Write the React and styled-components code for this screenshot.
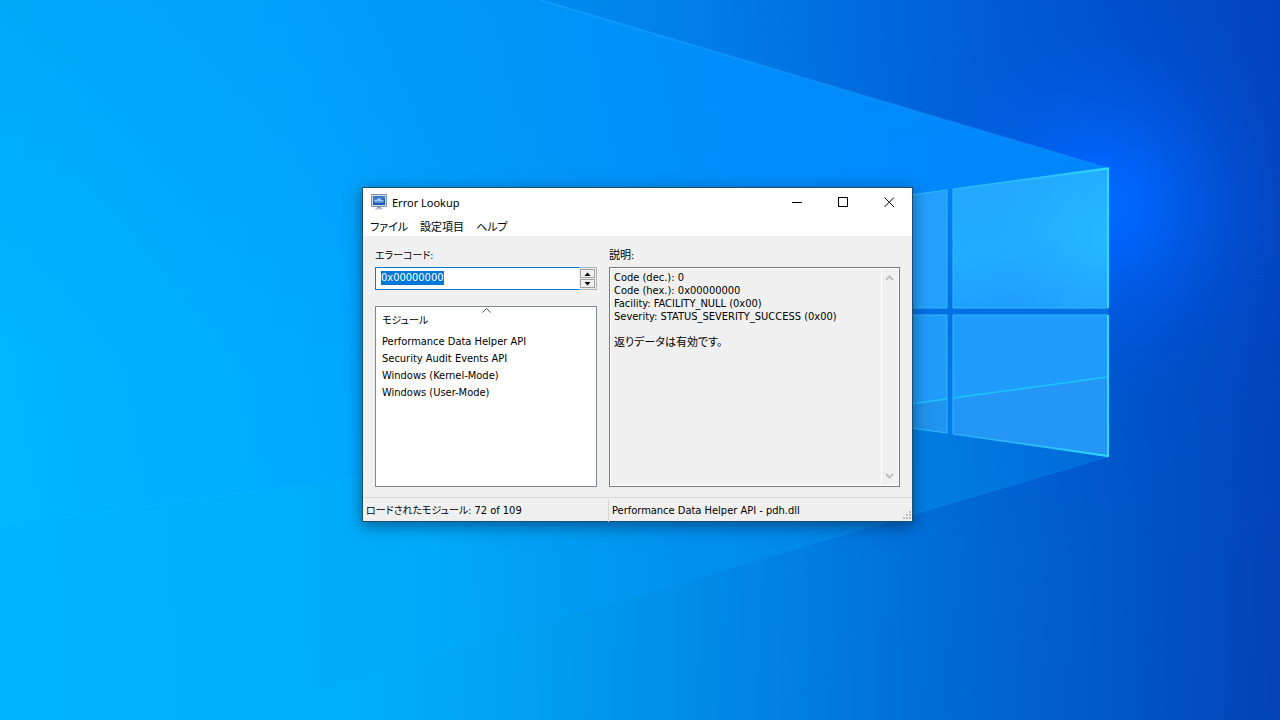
import { useEffect, useRef, useState } from "react";
import styled, { createGlobalStyle } from "styled-components";

const GlobalStyle = createGlobalStyle`
  *, *::before, *::after {
    box-sizing: border-box;
  }
  body {
    margin: 0;
    background: #0078d7;
  }
  button, input, textarea {
    font: inherit;
    color: inherit;
    margin: 0;
    padding: 0;
    border: 0;
    border-radius: 0;
    outline: none;
    background: none;
  }
`;

const Desktop = styled.main`
  position: relative;
  min-height: 100vh;
  overflow: hidden;
  display: flex;
  align-items: center;
  justify-content: center;
  padding: 0 5px 11px 0;
`;

const WallpaperSvg = styled.svg`
  position: absolute;
  inset: 0;
  width: 100%;
  height: 100%;
`;

const Window = styled.section`
  position: relative;
  width: 100%;
  max-width: 551px;
  border: 1px solid #18506f;
  background: #f0f0f0;
  color: #000;
  font-family: "DejaVu Sans Condensed", "Noto Sans CJK JP", sans-serif;
  font-size: 11px;
  line-height: 13px;
  font-feature-settings: "palt" 1;
  box-shadow: 0 4px 14px rgba(0, 20, 50, 0.5);
`;

const TitleBar = styled.header`
  display: flex;
  align-items: center;
  height: 28px;
  padding-left: 8px;
  gap: 5px;
  background: #fff;
`;

const Title = styled.h1`
  flex: 1;
  margin: 0;
  font-family: "Noto Sans", sans-serif;
  font-size: 11px;
  font-weight: 400;
`;

const CaptionButtons = styled.div`
  display: flex;
  align-self: stretch;
`;

const CaptionButton = styled.button`
  display: flex;
  align-items: center;
  justify-content: center;
  width: 46px;
  &:hover {
    background: ${(p) => (p.$danger ? "#e81123" : "#e5e5e5")};
  }
`;

const MenuBar = styled.nav`
  display: flex;
  gap: 12px;
  height: 20px;
  padding: 3px 7px 0;
  background: #fff;
`;

const MenuItem = styled.button`
  line-height: 17px;
  white-space: nowrap;
`;

const Content = styled.div`
  display: grid;
  grid-template-columns: 222fr 291fr;
  gap: 12px;
  padding: 12px 12px 10px;
`;

const Column = styled.div`
  display: flex;
  flex-direction: column;
  min-width: 0;
`;

const Label = styled.label`
  margin-bottom: 3px;
  font-size: ${(p) => (p.$kana ? 10 : 11)}px;
  line-height: 16px;
`;

const CodeField = styled.div`
  display: flex;
  height: 23px;
  margin-bottom: 16px;
`;

const CodeInput = styled.input`
  flex: 1;
  min-width: 0;
  padding: 3px 5px 4px;
  border: 1px solid #0078d7;
  border-right: 0;
  background: #fff;
  line-height: 14px;
  &::selection {
    background: #0078d7;
    color: #fff;
  }
`;

const Spinner = styled.div`
  display: flex;
  flex-direction: column;
  gap: 1px;
  width: 18px;
  padding: 1px;
  border: 1px solid #b4b4b4;
  border-left: 0;
`;

const SpinButton = styled.button`
  flex: 1;
  display: flex;
  align-items: center;
  justify-content: center;
  border: 1px solid #a0a0a0;
  background: #f0f0f0;
`;

const ListBox = styled.div`
  flex: 1;
  min-height: 181px;
  border: 1px solid #82878f;
  background: #fff;
`;

const ModuleTable = styled.table`
  width: 100%;
  border-collapse: collapse;
  & td {
    height: 17px;
    padding: 0 6px;
  }
`;

const HeaderCell = styled.th`
  position: relative;
  height: 26px;
  padding: 1px 6px 0;
  font-size: 10px;
  font-weight: 400;
  text-align: left;
`;

const SortMark = styled.svg`
  position: absolute;
  top: 1px;
  left: 50%;
  margin-left: -4px;
`;

const DescriptionBox = styled.div`
  flex: 1;
  display: flex;
  border: 1px solid #7a7a7a;
  outline: 1px solid #fff;
  outline-offset: -2px;
`;

const DescriptionText = styled.textarea`
  flex: 1;
  min-width: 0;
  padding: 3px 4px;
  line-height: 13px;
  resize: none;
  overflow: hidden;
`;

const ScrollBar = styled.div`
  display: flex;
  flex-direction: column;
  justify-content: space-between;
  width: 18px;
  padding-right: 2px;
  border-left: 1px solid #fff;
`;

const ScrollButton = styled.button`
  display: flex;
  align-items: center;
  justify-content: center;
  height: 20px;
`;

const StatusBar = styled.footer`
  position: relative;
  display: grid;
  grid-template-columns: 245fr 304fr;
  height: 24px;
  border-top: 1px solid #d7d7d7;
`;

const StatusPane = styled.div`
  margin: 1px 0;
  padding: 0 3px;
  line-height: 23px;
  white-space: nowrap;
  & + & {
    border-left: 1px solid #d7d7d7;
  }
`;

const Kana = styled.span`
  font-size: 10px;
`;

const Grip = styled.svg`
  position: absolute;
  right: 1px;
  bottom: 2px;
`;

function Wallpaper() {
  return (
    <WallpaperSvg viewBox="0 0 1280 720" preserveAspectRatio="xMidYMid slice" aria-hidden="true">
      <defs>
        <linearGradient id="upper" gradientUnits="userSpaceOnUse" x1="480" y1="60" x2="1280" y2="0">
          <stop offset="0" stopColor="#0092f0" />
          <stop offset="0.3" stopColor="#007ce8" />
          <stop offset="0.55" stopColor="#0064da" />
          <stop offset="0.8" stopColor="#0050cc" />
          <stop offset="1" stopColor="#0343bf" />
        </linearGradient>
        <linearGradient id="lower" gradientUnits="userSpaceOnUse" x1="0" y1="600" x2="1280" y2="640">
          <stop offset="0" stopColor="#00b4fb" />
          <stop offset="0.3" stopColor="#00adf8" />
          <stop offset="0.42" stopColor="#00a0f2" />
          <stop offset="0.6" stopColor="#0082e4" />
          <stop offset="0.76" stopColor="#0068d3" />
          <stop offset="0.88" stopColor="#0056c8" />
          <stop offset="1" stopColor="#0342b8" />
        </linearGradient>
        <linearGradient id="beam" gradientUnits="userSpaceOnUse" x1="0" y1="400" x2="1108" y2="200">
          <stop offset="0" stopColor="#00b6ff" />
          <stop offset="0.3" stopColor="#00a8ff" />
          <stop offset="0.5" stopColor="#0098f9" />
          <stop offset="0.72" stopColor="#008bfc" />
          <stop offset="1" stopColor="#0084fa" />
        </linearGradient>
        <linearGradient id="beamLow" gradientUnits="userSpaceOnUse" x1="0" y1="500" x2="1108" y2="440">
          <stop offset="0" stopColor="#00b5fd" />
          <stop offset="0.38" stopColor="#00aafa" />
          <stop offset="0.62" stopColor="#0090ee" />
          <stop offset="0.82" stopColor="#0080e4" />
          <stop offset="1" stopColor="#0068d8" />
        </linearGradient>
        <linearGradient id="edge" gradientUnits="userSpaceOnUse" x1="540" y1="0" x2="1108" y2="168">
          <stop offset="0" stopColor="#16a0ff" stopOpacity="0.7" />
          <stop offset="1" stopColor="#1a90ff" stopOpacity="0.3" />
        </linearGradient>
        <linearGradient id="rim" gradientUnits="userSpaceOnUse" x1="953" y1="0" x2="1108" y2="0">
          <stop offset="0" stopColor="#30b8ff" stopOpacity="0" />
          <stop offset="1" stopColor="#2cdcff" />
        </linearGradient>
        <linearGradient id="paneTop" x1="0" y1="0" x2="0.3" y2="1">
          <stop offset="0" stopColor="#24a8ff" />
          <stop offset="0.6" stopColor="#20acff" />
          <stop offset="1" stopColor="#1e9eff" />
        </linearGradient>
        <linearGradient id="gap" gradientUnits="userSpaceOnUse" x1="0" y1="168" x2="0" y2="457">
          <stop offset="0" stopColor="#0084f2" />
          <stop offset="0.5" stopColor="#0070e4" />
          <stop offset="1" stopColor="#0080e8" />
        </linearGradient>
        <radialGradient id="glow" gradientUnits="userSpaceOnUse" cx="1100" cy="205" r="220">
          <stop offset="0" stopColor="#006cff" />
          <stop offset="0.22" stopColor="#0066ff" stopOpacity="0.85" />
          <stop offset="0.5" stopColor="#0062f4" stopOpacity="0.4" />
          <stop offset="0.75" stopColor="#005cea" stopOpacity="0.12" />
          <stop offset="1" stopColor="#0058e0" stopOpacity="0" />
        </radialGradient>
        <radialGradient id="paneGlow" gradientUnits="userSpaceOnUse" cx="1108" cy="245" r="110">
          <stop offset="0" stopColor="#28c0ff" stopOpacity="0.7" />
          <stop offset="1" stopColor="#28b4ff" stopOpacity="0" />
        </radialGradient>
        <linearGradient id="split" gradientUnits="userSpaceOnUse" x1="0" y1="260" x2="0" y2="560">
          <stop offset="0" stopColor="#fff" stopOpacity="0" />
          <stop offset="1" stopColor="#fff" />
        </linearGradient>
        <linearGradient id="shade" gradientUnits="userSpaceOnUse" x1="0" y1="0" x2="0" y2="360">
          <stop offset="0" stopColor="#0090f4" stopOpacity="0.3" />
          <stop offset="1" stopColor="#0090f4" stopOpacity="0" />
        </linearGradient>
        <mask id="lowerMask">
          <rect width="1280" height="720" fill="url(#split)" />
        </mask>
      </defs>
      <rect width="1280" height="720" fill="url(#upper)" />
      <rect width="1280" height="720" fill="url(#lower)" mask="url(#lowerMask)" />
      <circle cx="1100" cy="205" r="220" fill="url(#glow)" />
      <path d="M0 0H540L1108 168V377L0 527Z" fill="url(#beam)" />
      <path d="M0 0H540L1108 168V360H0Z" fill="url(#shade)" />
      <path d="M0 527L1108 377V457L480 642L220 714L200 720H0Z" fill="url(#beamLow)" />
      <path d="M540 0L1108 168" stroke="url(#edge)" strokeWidth="2" />
      <path d="M0 526L912 403" stroke="#1cc0ff" strokeOpacity="0.3" />
      <path d="M200 720L480 642L1108 457" fill="none" stroke="#1aa8ff" strokeOpacity="0.2" />
      <path d="M880 199L1108 168V457L880 424Z" fill="url(#gap)" />
      <path d="M880 199L947 190V308H880Z" fill="#22a0fb" />
      <path d="M953 189L1108 168V308H953Z" fill="url(#paneTop)" />
      <path d="M953 189L1108 168V308H953Z" fill="url(#paneGlow)" />
      <path d="M880 315H947V433L880 424Z" fill="#209cfb" />
      <path d="M953 315H1108V456L953 434Z" fill="#1f9dff" />
      <path d="M880 408L947 399V433L880 424Z" fill="#2094ee" />
      <path d="M953 398L1108 377V456L953 434Z" fill="#2496f6" />
      <path d="M880 408L947 399M953 398L1108 377" stroke="#1cc4ff" strokeWidth="1.5" />
      <path d="M880 199L947 190V308H880M880 315H947V433L880 424" fill="none" stroke="#30b8ff" />
      <path d="M1108 168L953 189V308H1108M1108 315H953V434L1108 456" fill="none" stroke="#30bcff" />
      <path d="M953 189.500L1108 168.500V308M1108 315V456L953 433.500" fill="none" stroke="url(#rim)" strokeWidth="2" />
    </WallpaperSvg>
  );
}

function AppIcon() {
  return (
    <svg width="16" height="16" viewBox="0 0 16 16" aria-hidden="true">
      <path d="M0.500 0.500H15.500V12.500H0.500Z" fill="#d4dde6" stroke="#7f93a6" />
      <path d="M2 2H14V11H2Z" fill="#1d56b8" />
      <path d="M2 2H14V5L2 8Z" fill="#3b78d2" />
      <path d="M6 4.500H10V6H12.500V8.500H3.500V6H6Z" fill="#a9cdf5" />
      <path d="M4 7.500H12" stroke="#5d94dc" />
      <path d="M6 13H10V14H6Z" fill="#8fa2b3" />
      <path d="M4.500 14H11.500V15.500H4.500Z" fill="#b5c2cd" />
    </svg>
  );
}

const menus = ["ファイル", "設定項目", "ヘルプ"];

const modules = [
  "Performance Data Helper API",
  "Security Audit Events API",
  "Windows (Kernel-Mode)",
  "Windows (User-Mode)",
];

function toHex(n) {
  return "0x" + n.toString(16).toUpperCase().padStart(8, "0");
}

function describe(n) {
  return `Code (dec.): ${n}
Code (hex.): ${toHex(n)}
Facility: FACILITY_NULL (0x00)
Severity: STATUS_SEVERITY_SUCCESS (0x00)

返りデータは有効です。`;
}

export default function App() {
  const [code, setCode] = useState(0);
  const inputRef = useRef();

  useEffect(() => {
    inputRef.current.focus();
    inputRef.current.select();
  }, []);

  function onCodeChange(e) {
    const n = parseInt(e.target.value, 16);
    setCode(Number.isNaN(n) ? 0 : n);
  }

  return (
    <Desktop>
      <GlobalStyle />
      <Wallpaper />
      <Window>
        <TitleBar>
          <AppIcon />
          <Title>Error Lookup</Title>
          <CaptionButtons>
            <CaptionButton aria-label="Minimize">
              <svg width="11" height="11" shapeRendering="crispEdges"><path d="M0 5.500H10" stroke="#000" /></svg>
            </CaptionButton>
            <CaptionButton aria-label="Maximize">
              <svg width="11" height="11" shapeRendering="crispEdges"><path d="M0.500 0.500H9.500V9.500H0.500Z" fill="none" stroke="#000" /></svg>
            </CaptionButton>
            <CaptionButton aria-label="Close" $danger>
              <svg width="11" height="11"><path d="M0.500 0.500L10 10M10 0.500L0.500 10" stroke="#000" /></svg>
            </CaptionButton>
          </CaptionButtons>
        </TitleBar>
        <MenuBar>
          {menus.map((m) => <MenuItem key={m}>{m}</MenuItem>)}
        </MenuBar>

        <Content>
          <Column>
            <Label htmlFor="code" $kana>エラーコード:</Label>
            <CodeField>
              <CodeInput id="code" ref={inputRef} value={toHex(code)} onChange={onCodeChange} />
              <Spinner>
                <SpinButton aria-label="Increase" onClick={() => setCode(code + 1)}>
                  <svg width="7" height="4"><path d="M0.500 4L3.500 0.500L6.500 4Z" /></svg>
                </SpinButton>
                <SpinButton aria-label="Decrease" onClick={() => setCode(Math.max(0, code - 1))}>
                  <svg width="7" height="4"><path d="M0.500 0L3.500 3.500L6.500 0Z" /></svg>
                </SpinButton>
              </Spinner>
            </CodeField>
            <ListBox>
              <ModuleTable>
                <thead>
                  <tr>
                    <HeaderCell scope="col">
                      モジュール
                      <SortMark width="9" height="5"><path d="M0.500 4.500L4.500 0.500L8.500 4.500" fill="none" stroke="#505050" /></SortMark>
                    </HeaderCell>
                  </tr>
                </thead>
                <tbody>
                  {modules.map((m) => <tr key={m}><td>{m}</td></tr>)}
                </tbody>
              </ModuleTable>
            </ListBox>
          </Column>

          <Column>
            <Label htmlFor="description">説明:</Label>
            <DescriptionBox>
              <DescriptionText id="description" readOnly value={describe(code)} />
              <ScrollBar>
                <ScrollButton aria-label="Scroll up">
                  <svg width="9" height="6"><path d="M1 5L4.500 1.500L8 5" fill="none" stroke="#bfbfbf" strokeWidth="2" /></svg>
                </ScrollButton>
                <ScrollButton aria-label="Scroll down">
                  <svg width="9" height="6"><path d="M1 1L4.500 4.500L8 1" fill="none" stroke="#bfbfbf" strokeWidth="2" /></svg>
                </ScrollButton>
              </ScrollBar>
            </DescriptionBox>
          </Column>
        </Content>

        <StatusBar>
          <StatusPane><Kana>ロードされたモジュール:</Kana> 72 of 109</StatusPane>
          <StatusPane>Performance Data Helper API - pdh.dll</StatusPane>
          <Grip width="8" height="8">
            <path d="M6 0H8V2H6ZM3 3H5V5H3ZM6 3H8V5H6ZM0 6H2V8H0ZM3 6H5V8H3ZM6 6H8V8H6Z" fill="#bcbcbc" />
          </Grip>
        </StatusBar>
      </Window>
    </Desktop>
  );
}
